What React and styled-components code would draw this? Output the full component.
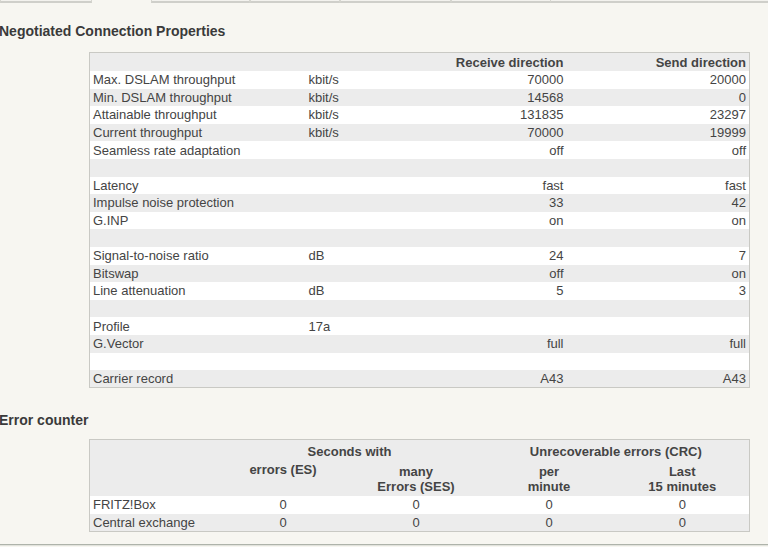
import React from "react";
import styled, { createGlobalStyle } from "styled-components";

const Global = createGlobalStyle`
  html, body { margin: 0; padding: 0; background: #f7f6f1; }
  body { font-family: "Liberation Sans", Arial, sans-serif; color: #404040; }
`;

const Page = styled.div`
  width: 768px;
  height: 547px;
  overflow: hidden;
  background: #f7f6f1;
  display: flex;
  flex-direction: column;
`;

const TabStrip = styled.div`
  display: flex;
  height: 3px;
`;

const Tab = styled.div`
  width: ${(p) => p.w}px;
  flex: ${(p) => (p.grow ? 1 : "none")};
  box-sizing: border-box;
  border-bottom: ${(p) => (p.active ? "none" : "2px solid #cfcfca")};
  border-left: ${(p) => (p.active || p.grow ? "none" : "1px solid #d6d6d0")};
  border-right: ${(p) => (p.active || p.grow ? "none" : "1px solid #d6d6d0")};
  background: ${(p) => (p.active ? "#f7f6f1" : "#f3f2ee")};
`;

const Heading = styled.h2`
  margin: ${(p) => p.mt}px 0 ${(p) => p.mb}px -1px;
  font-size: 14px;
  line-height: 17px;
  font-weight: bold;
  color: #3a3a3a;
`;

const Table = styled.table`
  margin-left: 89px;
  width: 660px;
  table-layout: fixed;
  border-collapse: collapse;
  border: 1px solid #c9c9c4;
  font-size: 13px;
  color: #444;
`;

const HeadRow = styled.tr`
  background: #ececec;
`;

const Row = styled.tr`
  height: ${(p) => p.h || 17.6}px;
  background: ${(p) => (p.odd ? "#ececec" : "#ffffff")};
`;

const Th = styled.th`
  font-weight: bold;
  text-align: ${(p) => p.align || "center"};
  padding: ${(p) => (p.align === "right" ? "0 3px 0 0" : "0")};
  height: ${(p) => p.h}px;
  line-height: 15px;
  color: #444;
  white-space: nowrap;
`;

const Td = styled.td`
  padding: 0 3px;
  line-height: 15px;
  text-align: ${(p) => p.align || "left"};
  white-space: nowrap;
`;

const FooterLine = styled.div`
  margin-top: 12px;
  height: 1px;
  background: #aeb3aa;
  border-bottom: 1px solid #e2e3dd;
`;

const props = [
  ["Max. DSLAM throughput", "kbit/s", "70000", "20000"],
  ["Min. DSLAM throughput", "kbit/s", "14568", "0"],
  ["Attainable throughput", "kbit/s", "131835", "23297"],
  ["Current throughput", "kbit/s", "70000", "19999"],
  ["Seamless rate adaptation", "", "off", "off"],
  null,
  ["Latency", "", "fast", "fast"],
  ["Impulse noise protection", "", "33", "42"],
  ["G.INP", "", "on", "on"],
  null,
  ["Signal-to-noise ratio", "dB", "24", "7"],
  ["Bitswap", "", "off", "on"],
  ["Line attenuation", "dB", "5", "3"],
  null,
  ["Profile", "17a", "", ""],
  ["G.Vector", "", "full", "full"],
  null,
  ["Carrier record", "", "A43", "A43"],
];

const errors = [
  ["FRITZ!Box", "0", "0", "0", "0"],
  ["Central exchange", "0", "0", "0", "0"],
];

export default function App() {
  return (
    <Page>
      <Global />
      <TabStrip>
        <Tab w={92} />
        <Tab w={59} active />
        <Tab w={99} />
        <Tab w={90} />
        <Tab w={111} />
        <Tab w={100} />
        <Tab grow />
      </TabStrip>

      <Heading mt={20} mb={12}>Negotiated Connection Properties</Heading>
      <Table>
        <colgroup>
          <col style={{ width: 216 }} />
          <col style={{ width: 78 }} />
          <col style={{ width: 183 }} />
          <col style={{ width: 183 }} />
        </colgroup>
        <thead>
          <HeadRow>
            <Th h={18} />
            <Th h={18} />
            <Th h={18} align="right">Receive direction</Th>
            <Th h={18} align="right">Send direction</Th>
          </HeadRow>
        </thead>
        <tbody>
          {props.map((r, i) => (
            <Row key={i} odd={i % 2 === 1}>
              <Td>{r ? r[0] : ""}</Td>
              <Td>{r ? r[1] : ""}</Td>
              <Td align="right">{r ? r[2] : ""}</Td>
              <Td align="right">{r ? r[3] : ""}</Td>
            </Row>
          ))}
        </tbody>
      </Table>

      <Heading mt={24} mb={10}>Error counter</Heading>
      <Table>
        <colgroup>
          <col style={{ width: 127 }} />
          <col style={{ width: 133 }} />
          <col style={{ width: 133 }} />
          <col style={{ width: 133 }} />
          <col style={{ width: 134 }} />
        </colgroup>
        <thead>
          <HeadRow>
            <Th h={22} />
            <Th h={22} colSpan={2}>Seconds with</Th>
            <Th h={22} colSpan={2}>Unrecoverable errors (CRC)</Th>
          </HeadRow>
          <HeadRow>
            <Th h={34} />
            <Th h={34} style={{ verticalAlign: "top" }}>errors (ES)</Th>
            <Th h={34}>many<br />Errors (SES)</Th>
            <Th h={34}>per<br />minute</Th>
            <Th h={34}>Last<br />15 minutes</Th>
          </HeadRow>
        </thead>
        <tbody>
          {errors.map((r, i) => (
            <Row key={i} odd={i % 2 === 1} h={17.5}>
              <Td>{r[0]}</Td>
              <Td align="center">{r[1]}</Td>
              <Td align="center">{r[2]}</Td>
              <Td align="center">{r[3]}</Td>
              <Td align="center">{r[4]}</Td>
            </Row>
          ))}
        </tbody>
      </Table>
      <FooterLine />
    </Page>
  );
}
